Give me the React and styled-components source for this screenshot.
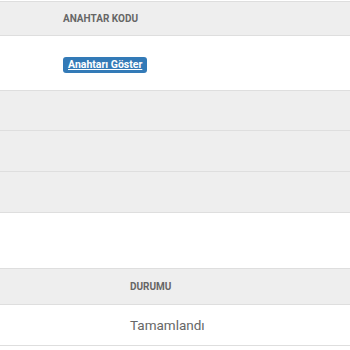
import React from "react";
import styled, { createGlobalStyle } from "styled-components";

const Global = createGlobalStyle`
  html, body { margin: 0; padding: 0; background: #fff; }
  body { font-family: Roboto, "Liberation Sans", Arial, sans-serif; }
`;

const Page = styled.div`
  width: 350px;
  padding-top: 1px;
  display: flex;
  flex-direction: column;
`;

const Table = styled.div`
  display: flex;
  flex-direction: column;
  border-top: 1px solid #dedede;
  margin-top: ${(p) => p.$gap || 0}px;
`;

const Row = styled.div`
  display: flex;
  align-items: center;
  height: ${(p) => p.$h}px;
  background: ${(p) => (p.$gray ? "#eeeeee" : "#ffffff")};
  border-bottom: 1px solid #dedede;
  padding-left: ${(p) => p.$indent}px;
`;

const HeadCell = styled.div`
  font-size: 10px;
  font-weight: 700;
  color: #666666;
  text-transform: uppercase;
  letter-spacing: 0;
`;

const TextCell = styled.div`
  font-size: 13.5px;
  color: #666666;
`;

const KeyButton = styled.a`
  display: inline-flex;
  align-items: center;
  height: 16px;
  padding: 0 5px;
  border-radius: 3px;
  background: #337ab7;
  color: #ffffff;
  font-size: 10.5px;
  font-weight: 700;
  text-decoration: underline;
  cursor: pointer;
  margin-top: 3px;
`;

export default function App() {
  return (
    <>
      <Global />
      <Page>
        <Table>
          <Row $gray $h={33} $indent={63}>
            <HeadCell>Anahtar Kodu</HeadCell>
          </Row>
          <Row $h={54} $indent={63}>
            <KeyButton>Anahtarı Göster</KeyButton>
          </Row>
          <Row $gray $h={39} $indent={63} />
          <Row $gray $h={40} $indent={63} />
          <Row $gray $h={40} $indent={63} />
        </Table>
        <Table $gap={55}>
          <Row $gray $h={35} $indent={130}>
            <HeadCell>Durumu</HeadCell>
          </Row>
          <Row $h={40} $indent={130}>
            <TextCell>Tamamlandı</TextCell>
          </Row>
        </Table>
      </Page>
    </>
  );
}
